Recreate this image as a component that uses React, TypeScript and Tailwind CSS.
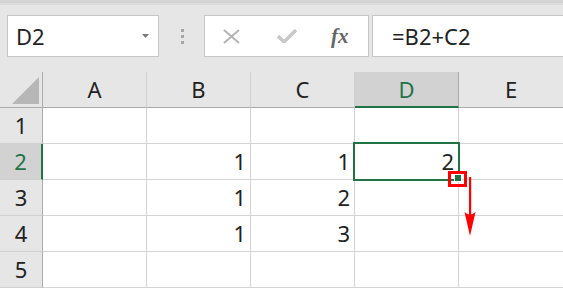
import { Fragment } from "react";

const cols = ["A", "B", "C", "D", "E"];
const rows: (string | number)[][] = [
  ["", "", "", "", ""],
  ["", 1, 1, 2, ""],
  ["", 1, 2, "", ""],
  ["", 1, 3, "", ""],
  ["", "", "", "", ""],
];

export default function App() {
  return (
    <div
      className="relative w-[563px] h-[288px] overflow-hidden bg-[#e6e6e6] text-[#222]"
      style={{ fontFamily: '"Noto Sans", "Noto Sans CJK JP", sans-serif' }}
    >
      {/* Ribbon edge */}
      <div className="h-[3px] bg-[#d4d4d4]" />
      <div className="h-[2px] bg-[#dcdcdc]" />

      {/* Formula bar */}
      <div className="h-[67px] flex items-start pt-[10px] pl-[7px]">
        <div className="w-[152px] h-[42px] bg-white border border-[#c6c6c6] flex items-center pl-[8px] pr-[9px]">
          <span className="text-[22px] leading-none flex-1">D2</span>
          <svg width="7" height="4" viewBox="0 0 7 4">
            <path d="M0 0h7L3.5 4z" fill="#7a7a7a" />
          </svg>
        </div>
        <div className="w-[45px] h-[42px] flex flex-col items-center justify-center gap-[3px] pl-[1px]">
          <div className="w-[3px] h-[3px] bg-[#a6a6a6]" />
          <div className="w-[3px] h-[3px] bg-[#a6a6a6]" />
          <div className="w-[3px] h-[3px] bg-[#a6a6a6]" />
        </div>
        <div className="w-[165px] h-[42px] bg-white border border-[#c6c6c6] flex items-center">
          <svg width="17" height="15" viewBox="0 0 17 15" className="ml-[18px]">
            <path d="M1 1l15 13M16 1L1 14" stroke="#b4b4b4" strokeWidth="2" />
          </svg>
          <svg width="20" height="14" viewBox="0 0 20 14" className="ml-[37px]">
            <path d="M1 7l6 6L19 1" stroke="#c8c8c8" strokeWidth="3.5" fill="none" />
          </svg>
          <span
            className="ml-[34px] text-[21px] italic font-bold text-[#666] leading-none"
            style={{ fontFamily: '"Liberation Serif", serif' }}
          >
            fx
          </span>
        </div>
        <div className="flex-1 ml-[3px] h-[42px] bg-white border border-[#c6c6c6] border-r-0 flex items-center pl-[19px]">
          <span className="text-[22px] leading-none">=B2+C2</span>
        </div>
      </div>

      {/* Sheet grid */}
      <div className="grid grid-cols-[43px_104px_104px_104px_104px_105px] grid-rows-[36px_36px_36px_36px_36px_36px] bg-white">
        <div className="bg-[#e6e6e6] border-r border-b border-[#ababab] relative">
          <svg width="28" height="27" viewBox="0 0 28 27" className="absolute left-[12px] top-[5px]">
            <path d="M0 27L27 0v27z" fill="#b7b7b7" />
          </svg>
        </div>
        {cols.map((c) => (
          <div
            key={c}
            className={`flex items-center justify-center text-[22px] border-r ${
              c === "D"
                ? "bg-[#d2d2d2] border-r-[#ababab] border-b-2 border-b-[#217346] text-[#217346]"
                : "bg-[#e6e6e6] border-r-[#d0d0d0] border-b border-b-[#ababab]"
            }`}
          >
            {c}
          </div>
        ))}
        {rows.map((r, i) => (
          <Fragment key={i}>
            <div
              className={`flex items-center justify-center text-[22px] border-b border-b-[#d0d0d0] ${
                i === 1
                  ? "bg-[#d2d2d2] border-r-2 border-r-[#217346] text-[#217346]"
                  : "bg-[#e6e6e6] border-r border-r-[#ababab]"
              }`}
            >
              {i + 1}
            </div>
            {r.map((v, j) => (
              <div
                key={j}
                className="border-r border-b border-[#d4d4d4] flex items-center justify-end pr-[4px] text-[22px]"
              >
                {v}
              </div>
            ))}
          </Fragment>
        ))}
      </div>

      {/* Active cell outline */}
      <div className="absolute left-[353px] top-[142px] w-[107px] h-[39px] border-2 border-[#217346] pointer-events-none" />
      {/* Fill handle */}
      <div className="absolute left-[454px] top-[174px] w-[8px] h-[8px] bg-[#217346] border border-white" />

      {/* Callout */}
      <div className="absolute left-[448px] top-[171px] w-[19px] h-[16px] border-[3px] border-[#ff0000]" />
      <svg width="14" height="60" viewBox="0 0 14 60" className="absolute left-[463px] top-[177px]">
        <rect x="6" y="0" width="2.2" height="42" fill="#ff0000" />
        <path d="M1.5 35Q7 40 12.5 35L7 59z" fill="#ff0000" />
      </svg>
    </div>
  );
}
